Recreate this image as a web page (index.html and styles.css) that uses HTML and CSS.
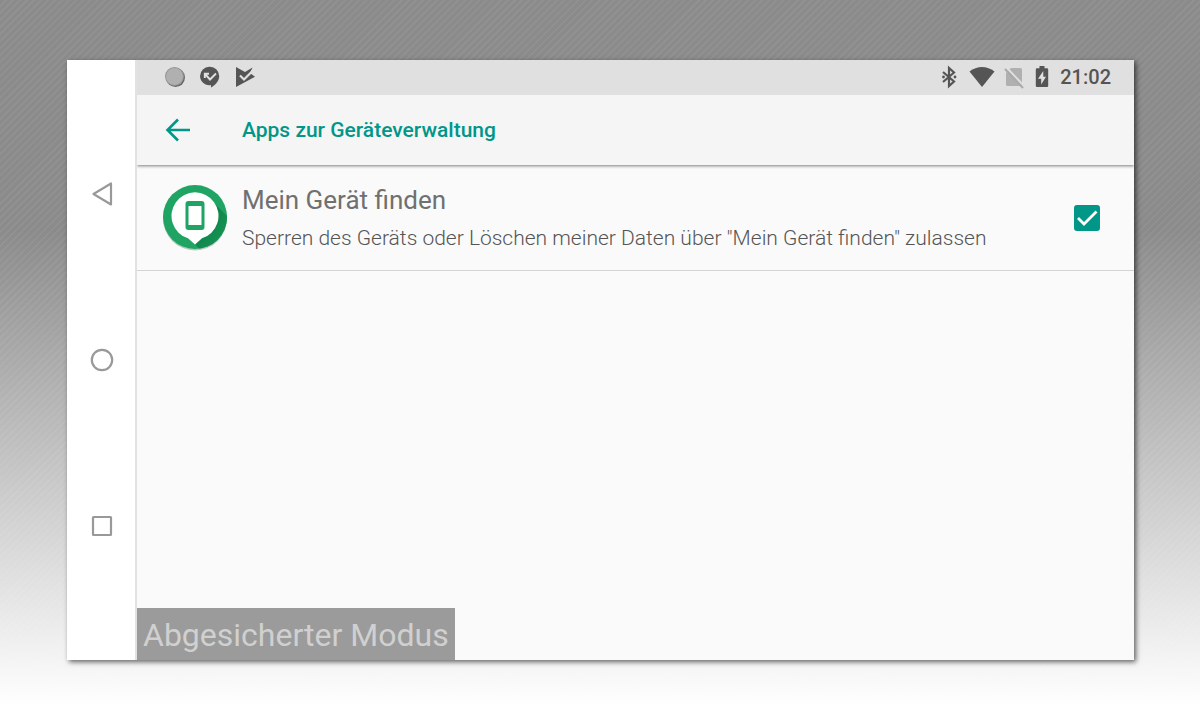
FILE: index.html
```
<!DOCTYPE html>
<html lang="de">
<head>
    <meta charset="UTF-8">
    <meta name="viewport" content="width=device-width, initial-scale=1.0">
    <title>Apps zur Geräteverwaltung</title>
    <link rel="stylesheet" href="styles.css">
</head>
<body>

    <div class="device">
        <nav class="navbar">
            <button class="nav-btn" type="button" aria-label="Zurück">
                <svg width="24" height="26" viewBox="0 0 24 26"><path d="M21 2.500v21L3.500 13z"/></svg>
            </button>
            <button class="nav-btn" type="button" aria-label="Startbildschirm">
                <svg width="24" height="24" viewBox="0 0 24 24"><circle cx="12" cy="12" r="10.200"/></svg>
            </button>
            <button class="nav-btn" type="button" aria-label="Übersicht">
                <svg width="24" height="24" viewBox="0 0 24 24"><rect x="3" y="3" width="18" height="18" rx=".5"/></svg>
            </button>
        </nav>

        <div class="screen">
            <div class="statusbar">
                <div class="notifications">
                    <svg width="22" height="22" viewBox="0 0 22 22">
                        <circle cx="11.500" cy="11.500" r="9.500" fill="#666"/>
                        <circle cx="10.500" cy="10.500" r="9.500" fill="#949494"/>
                        <circle cx="10.500" cy="10.500" r="8.500" fill="#b0b0b0"/>
                    </svg>
                    <svg width="22" height="22" viewBox="0 0 22 22">
                        <path fill="#555" d="M11 .8a9.200 9.200 0 0 1 9.200 9.200c0 4.800-3.400 9-8.200 11.500V19A9.200 9.200 0 1 1 11 .8z"/>
                        <path fill="none" stroke="#e0e0e0" stroke-width="1.900" d="M5.800 12V7.800H10M6 8l5 5.500 6-6"/>
                    </svg>
                    <svg width="22" height="22" viewBox="0 0 22 22">
                        <path fill="#555" d="M2 1l9 5L18.500 1.500 16 7l5 3.800L2 21z"/>
                        <path fill="none" stroke="#e0e0e0" stroke-width="2.200" d="M6 9.500l4 4L18.500 5"/>
                    </svg>
                </div>
                <div class="system">
                    <svg width="22" height="24" viewBox="0 0 22 24">
                        <path fill="none" stroke="#555" stroke-width="2.200" d="M5 7l11 9.500-5 4.500V3l5 4.500L5 17"/>
                        <circle cx="5.500" cy="12" r="1.400" fill="#555"/>
                        <circle cx="17" cy="12" r="1.400" fill="#555"/>
                    </svg>
                    <svg width="26" height="24" viewBox="0 0 26 24">
                        <path fill="#555" d="M.5 6.500C8 .5 18 .5 25.500 6.500L13 22z"/>
                    </svg>
                    <svg width="22" height="24" viewBox="2 0 22 24">
                        <path fill="#b0b0b0" d="M9 3h9.500a1.500 1.500 0 0 1 1.500 1.500V21H5.500A1.500 1.500 0 0 1 4 19.500V8z"/>
                        <path stroke="#e0e0e0" stroke-width="2" d="M4.500 2.500l18 19"/>
                        <path stroke="#aaa" stroke-width="2" d="M3 4l18 19"/>
                    </svg>
                    <svg width="14" height="24" viewBox="0 0 14 24">
                        <path fill="#555" d="M4.500 1h5v2.200H12a1.200 1.200 0 0 1 1.200 1.200v16.400A1.200 1.200 0 0 1 12 22H2a1.200 1.200 0 0 1-1.200-1.200V4.400A1.200 1.200 0 0 1 2 3.200h2.500z"/>
                        <path fill="#e0e0e0" d="M8.300 6L3 13.800h3.200V19.500L11 11.800H8.300z"/>
                    </svg>
                    <span class="clock">21:02</span>
                </div>
            </div>

            <header class="toolbar">
                <button class="back" type="button" aria-label="Nach oben">
                    <svg width="26" height="26" viewBox="0 0 26 26"><path d="M25 13H3M13 2.500L2.500 13 13 23.500"/></svg>
                </button>
                <h1>Apps zur Geräteverwaltung</h1>
            </header>

            <main class="content">
                <div class="item">
                    <svg class="app-icon" width="66" height="68" viewBox="0 0 66 68">
                        <defs>
                            <linearGradient id="shade" x1="0" y1="0" x2="1" y2="1">
                                <stop offset="0" stop-color="#08763f"/>
                                <stop offset="1" stop-color="#1b9d5b"/>
                            </linearGradient>
                            <clipPath id="disc"><circle cx="33" cy="33" r="32"/></clipPath>
                        </defs>
                        <circle cx="33" cy="34.500" r="32" fill="#b9c7c0"/>
                        <circle cx="33" cy="33" r="32" fill="#1fa463"/>
                        <path clip-path="url(#disc)" fill="url(#shade)" d="M50 17l20 20v30H39l-6-7z"/>
                        <path fill="#fff" d="M33 60.500l-7-6.200a23.500 23.500 0 1 1 14 0z"/>
                        <rect x="23.500" y="17" width="19" height="29" rx="3" fill="#1fa463"/>
                        <path fill="#fff" d="M26.500 22h13v19h-13z"/>
                    </svg>
                    <div class="text">
                        <label for="find-device">Mein Gerät finden</label>
                        <p>Sperren des Geräts oder Löschen meiner Daten über "Mein Gerät finden" zulassen</p>
                    </div>
                    <div class="check">
                        <input type="checkbox" id="find-device" checked>
                        <svg width="26" height="26" viewBox="0 0 26 26"><path d="M4 13l6 6L22.500 6.500"/></svg>
                    </div>
                </div>
            </main>

            <div class="safe-mode">Abgesicherter Modus</div>
        </div>
    </div>

</body>
</html>
```
FILE: styles.css
```
* {
    box-sizing: border-box;
}
body {
    margin: 0;
    padding: 60px 66px 60px 67px;
    display: flex;
    min-height: 100vh;
    font-family: Roboto, 'Noto Sans', sans-serif;
    color: #707070;
    background:
        linear-gradient(rgba(255, 255, 255, 0) 32%, #fff 98%),
        repeating-linear-gradient(135deg, #8b8b8b 0, #8b8b8b 3px, #929292 4px, #929292 5px);
}
h1, p {
    margin: 0;
}
button {
    padding: 0;
    border: none;
    background: none;
    cursor: pointer;
}
svg {
    display: block;
    flex: none;
}
.device {
    flex: 1;
    display: flex;
    background-color: #fafafa;
    box-shadow: 2px 2px 5px rgba(0, 0, 0, 0.6);
}
.navbar {
    width: 70px;
    flex: none;
    display: flex;
    flex-direction: column;
    justify-content: center;
    background-color: #fff;
    border-right: 2px solid #e2e2e2;
}
.nav-btn {
    height: 166px;
    padding-left: 2px;
    display: flex;
    justify-content: center;
    align-items: center;
}
.nav-btn path, .nav-btn circle, .nav-btn rect {
    fill: none;
    stroke: #999;
    stroke-width: 2.2;
    stroke-linejoin: round;
}
.screen {
    flex: 1;
    min-width: 0;
    display: flex;
    flex-direction: column;
}
.statusbar {
    height: 35px;
    padding: 0 23px 2px 27px;
    display: flex;
    justify-content: space-between;
    align-items: center;
    background-color: #e0e0e0;
}
.notifications {
    display: flex;
    gap: 13px;
}
.system {
    display: flex;
    align-items: center;
    gap: 9px;
}
.clock {
    margin-left: 2px;
    font-size: 20px;
    font-weight: 500;
    line-height: 24px;
    color: #555;
}
.toolbar {
    height: 70px;
    padding: 0 28px;
    display: flex;
    align-items: center;
    gap: 51px;
    background-color: #f5f5f5;
    box-shadow: 0 1px 3px rgba(0, 0, 0, 0.5);
    clip-path: inset(0 0 -6px 0);
}
.back path {
    fill: none;
    stroke: #009688;
    stroke-width: 2.6;
}
h1 {
    font-size: 21px;
    font-weight: 500;
    color: #009688;
}
.content {
    flex: 1;
}
.item {
    padding: 18px 34px 18px 25px;
    display: flex;
    align-items: center;
    border-bottom: 1px solid #d4d4d4;
}
.text {
    flex: 1;
    margin-left: 14px;
}
.text label {
    display: block;
    font-size: 26px;
    line-height: 35px;
}
.text p {
    margin-top: 6px;
    font-size: 21px;
    font-weight: 300;
    line-height: 28px;
    color: #555;
}
.check {
    display: grid;
}
.check input, .check svg {
    grid-area: 1 / 1;
}
.check input {
    appearance: none;
    width: 26px;
    height: 26px;
    margin: 0;
    border: 2px solid #757575;
    border-radius: 3px;
}
.check input:checked {
    border-color: #009688;
    background-color: #009688;
}
.check svg {
    pointer-events: none;
    z-index: 1;
}
.check path {
    fill: none;
    stroke: #fff;
    stroke-width: 2.8;
}
.check input:not(:checked) + svg {
    visibility: hidden;
}
.safe-mode {
    align-self: flex-start;
    padding: 8px 6px 6px;
    font-size: 32px;
    line-height: 38px;
    color: #d0d0d0;
    background-color: #9b9b9b;
}
```
